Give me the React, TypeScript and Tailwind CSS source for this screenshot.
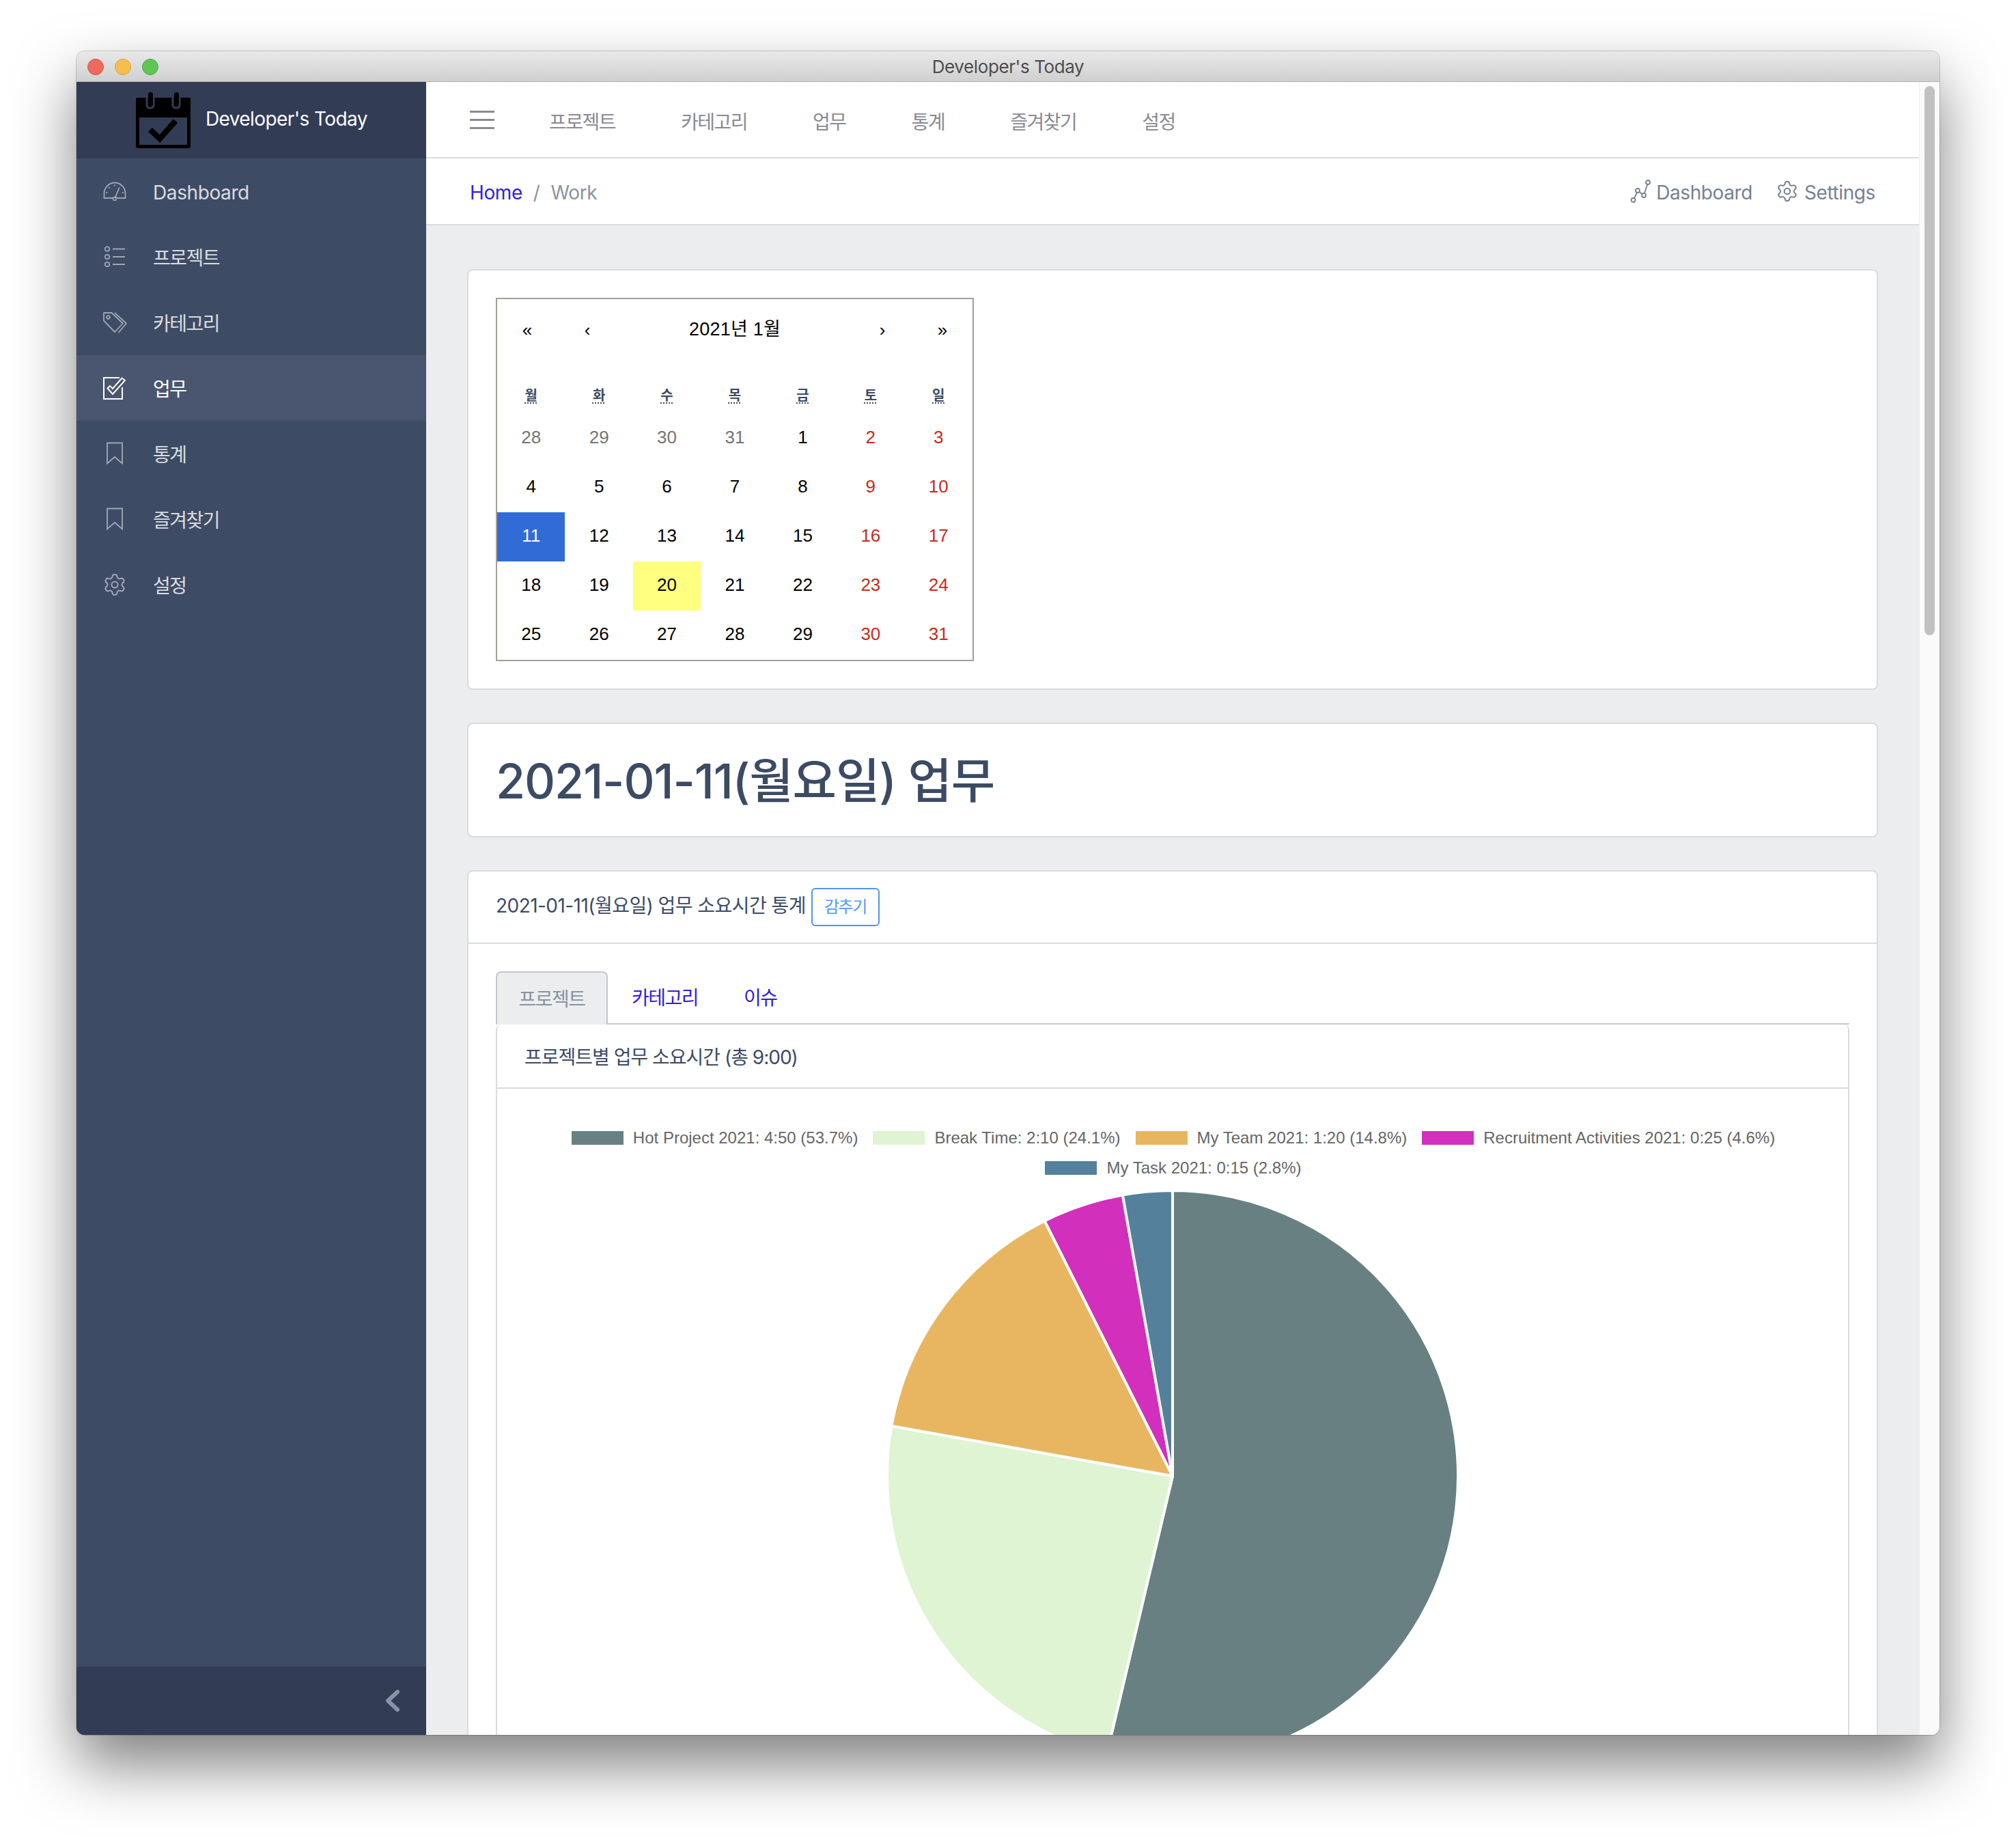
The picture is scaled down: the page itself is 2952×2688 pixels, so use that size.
import React from "react";
import { Settings } from "lucide-react";

const KR = "tracking-[-1.5px]";
const LAT = "tracking-[-0.4px]";

function IconGauge() {
  return (
    <svg width="34" height="28" viewBox="0 0 34 28" fill="none" stroke="currentColor" strokeWidth="1.8" strokeLinecap="round" strokeLinejoin="round">
      <path d="M13.500 24H1.500V17a15.500 15.500 0 0 1 31 0v7H21" />
      <circle cx="17" cy="25" r="2.400" />
      <path d="M18 22.600 23.500 9" />
      <path d="M17 5v.6M8.500 8.500l.5.500M5 16h.6M28.500 16h.6" />
    </svg>
  );
}
function IconList() {
  return (
    <svg width="32" height="32" viewBox="0 0 32 32" fill="none" stroke="currentColor" strokeWidth="1.8">
      <circle cx="5" cy="4.500" r="3.200" /><circle cx="5" cy="16" r="3.200" /><circle cx="5" cy="27" r="3.200" />
      <path d="M13 4.500h18M13 16h18M13 27h18" />
    </svg>
  );
}
function IconTags() {
  return (
    <svg width="36" height="32" viewBox="0 0 36 32" fill="none" stroke="currentColor" strokeWidth="1.800" strokeLinejoin="round">
      <path d="M2 2h11.500L30 17.500 18 30 2 13.500Z" />
      <circle cx="8.500" cy="8.500" r="2.300" />
      <path d="M18 2 35 17.500 23.500 31" />
    </svg>
  );
}
function IconTask() {
  return (
    <svg width="34" height="34" viewBox="0 0 34 34" fill="none" stroke="currentColor" strokeWidth="2">
      <path d="M28 16v17H1V2h23" />
      <path d="M6.500 17.500 10 14l4 4L27.500 2.500 32 6 14 26Z" />
    </svg>
  );
}
function IconBookmark() {
  return (
    <svg width="26" height="34" viewBox="0 0 26 34" fill="none" stroke="currentColor" strokeWidth="1.900">
      <path d="M2 1.500h22v30L13 22 2 31.500Z" />
    </svg>
  );
}
function IconChartLine() {
  return (
    <svg width="30" height="36" viewBox="0 0 30 36" fill="none" stroke="currentColor" strokeWidth="1.800">
      <circle cx="4.500" cy="31" r="3" /><circle cx="11" cy="17" r="3" /><circle cx="20" cy="24" r="3" /><circle cx="26" cy="5" r="3" />
      <path d="M6 28 10 20M13.500 19 18 22.500M21 21 25.200 8" />
    </svg>
  );
}
function Logo() {
  return (
    <svg width="80" height="82" viewBox="0 0 80 82">
      <path fill="#000" fillRule="evenodd" d="M3 8h75a2 2 0 0 1 2 2v69a3 3 0 0 1-3 3H3a3 3 0 0 1-3-3V10a2 2 0 0 1 2-2Zm2 29v40h70V37Z" />
      <path d="M16 2v17a4 4 0 0 0 4 4h2a4 4 0 0 0 4-4V2M54 2v17a4 4 0 0 0 4 4h2a4 4 0 0 0 4-4V2" fill="none" stroke="#323c55" strokeWidth="3" />
      <rect x="18" y="0" width="7" height="20" rx="3.500" fill="#000" />
      <rect x="56" y="0" width="7" height="20" rx="3.500" fill="#000" />
      <path d="M21 55 35 68 58 42" fill="none" stroke="#000" strokeWidth="8.500" />
    </svg>
  );
}

const side = [
  { t: "Dashboard", i: <IconGauge /> },
  { t: "프로젝트", i: <IconList /> },
  { t: "카테고리", i: <IconTags /> },
  { t: "업무", i: <IconTask />, a: true },
  { t: "통계", i: <IconBookmark /> },
  { t: "즐겨찾기", i: <IconBookmark /> },
  { t: "설정", i: <Settings size={36} strokeWidth={1.35} /> },
];

function Sidebar() {
  return (
    <div className="w-[512px] shrink-0 flex flex-col bg-[#3e4b64]">
      <div className="h-[112px] bg-[#323c55] flex items-center pl-[87px] gap-[22px] text-[28px] text-white">
        <Logo />
        <span className="-translate-y-[2px] tracking-[-0.6px]">Developer's Today</span>
      </div>
      <div className="flex-1">
        {side.map((s) => (
          <div key={s.t} className={`h-[96px] flex items-center text-[28px] ${s.a ? "bg-[#4a566f] text-white" : "text-white/80"}`}>
            <div className={`w-[112px] flex justify-center ${s.a ? "text-white" : "text-white/50"}`}>{s.i}</div>
            <span className={`pt-[3px] ${s.t === "Dashboard" ? LAT : KR}`}>{s.t}</span>
          </div>
        ))}
      </div>
      <div className="h-[100px] bg-[#323c55] flex items-center justify-end pr-[38px]">
        <svg width="24" height="32" viewBox="0 0 24 32" fill="none" stroke="#8a93a3" strokeWidth="6" strokeLinecap="round" strokeLinejoin="round">
          <path d="M20 3 6 16l14 13" />
        </svg>
      </div>
    </div>
  );
}

function TopNav() {
  return (
    <div className="h-[112px] bg-white border-b-2 border-[#d8dbe0] flex items-center pl-[64px] shrink-0">
      <div className="w-[36px] flex flex-col gap-[9px]">
        <div className="h-[3px] bg-[#8a8a94]" /><div className="h-[3px] bg-[#8a8a94]" /><div className="h-[3px] bg-[#8a8a94]" />
      </div>
      <div className={`flex ml-[80px] gap-[96px] pt-[7px] text-[28px] text-[#8a8a94] ${KR}`}>
        {["프로젝트", "카테고리", "업무", "통계", "즐겨찾기", "설정"].map((x) => <span key={x}>{x}</span>)}
      </div>
    </div>
  );
}

function Breadcrumb() {
  return (
    <div className={`h-[98px] bg-white border-b-2 border-[#d8dbe0] flex items-center pl-[64px] pr-[64px] justify-between text-[28px] shrink-0 ${LAT}`}>
      <div className="flex items-center pt-[3px]">
        <span className="text-[#321fdb]">Home</span>
        <span className="text-[#8a93a2] ml-[16px]">/</span>
        <span className="text-[#8a93a2] ml-[16px]">Work</span>
      </div>
      <div className="flex items-center text-[#768192]">
        <IconChartLine />
        <span className="ml-[8px] pt-[3px]">Dashboard</span>
        <Settings size={34} strokeWidth={1.4} className="ml-[34px]" />
        <span className="ml-[8px] pt-[3px]">Settings</span>
      </div>
    </div>
  );
}

const days: [string, string][] = [];
const gray = "text-[#757575]", red = "text-[#c92a1d]", blk = "text-black";
[28, 29, 30, 31].forEach((d) => days.push([String(d), gray]));
for (let d = 1; d <= 31; d++) {
  const idx = (d + 3) % 7;
  days.push([String(d), idx === 5 || idx === 6 ? red : blk]);
}

function Calendar() {
  return (
    <div className="w-[700px] border-2 border-[#a0a096] bg-white font-['Liberation_Sans','Noto_Sans_CJK_KR',sans-serif] text-[26px] text-black">
      <div className="h-[88px] mb-[26px] flex items-center text-center">
        <span className="w-[88px] pt-[2px]">«</span>
        <span className="w-[88px] pt-[2px]">‹</span>
        <span className="flex-1 text-[27px] tracking-[0.2px]">2021년 1월</span>
        <span className="w-[88px] pt-[2px]">›</span>
        <span className="w-[88px] pt-[2px]">»</span>
      </div>
      <div className="grid grid-cols-7 h-[54px] items-center text-center text-[20px] font-bold text-[#3c4b64]">
        {["월", "화", "수", "목", "금", "토", "일"].map((x) => (
          <div key={x}><span className="underline decoration-dotted decoration-[1.5px] underline-offset-[3px]">{x}</span></div>
        ))}
      </div>
      <div className="grid grid-cols-7 auto-rows-[72px]">
        {days.map(([t, c], i) => {
          const active = i === 14, today = i === 23;
          return (
            <div key={i} className={`flex items-center justify-center pb-[3px] ${active ? "bg-[#316cd6] text-white" : today ? "bg-[#ffff80] text-black" : c}`}>{t}</div>
          );
        })}
      </div>
    </div>
  );
}

const slices = [
  { p: 0.537, c: "#688082" },
  { p: 0.241, c: "#dff4d2" },
  { p: 0.148, c: "#e8b661" },
  { p: 0.046, c: "#d22fbd" },
  { p: 0.028, c: "#54809b" },
];

function Pie() {
  let a = 0;
  const R = 418, C = 420;
  return (
    <svg width="840" height="840" viewBox="0 0 840 840" className="block mx-auto">
      {slices.map((s) => {
        const a0 = a, a1 = a + s.p * Math.PI * 2;
        a = a1;
        const x0 = C + R * Math.sin(a0), y0 = C - R * Math.cos(a0);
        const x1 = C + R * Math.sin(a1), y1 = C - R * Math.cos(a1);
        return (
          <path key={s.c} fill={s.c} stroke="#fff" strokeWidth="4" strokeLinejoin="round"
            d={`M${C} ${C}L${x0} ${y0}A${R} ${R} 0 ${s.p > 0.5 ? 1 : 0} 1 ${x1} ${y1}Z`} />
        );
      })}
    </svg>
  );
}

const legend = [
  ["#688082", "Hot Project 2021: 4:50 (53.7%)"],
  ["#dff4d2", "Break Time: 2:10 (24.1%)"],
  ["#e8b661", "My Team 2021: 1:20 (14.8%)"],
  ["#d22fbd", "Recruitment Activities 2021: 0:25 (4.6%)"],
  ["#54809b", "My Task 2021: 0:15 (2.8%)"],
];

function Legend() {
  return (
    <div className="mx-auto w-[1800px] pl-[2px] flex flex-wrap justify-center gap-x-[22px] gap-y-[16px] font-['Liberation_Sans',sans-serif] text-[24px] leading-[28px] text-[#666666]">
      {legend.map(([c, t]) => (
        <div key={t} className="flex items-center gap-[14px]">
          <span className="w-[76px] h-[20px]" style={{ backgroundColor: c }} />
          <span>{t}</span>
        </div>
      ))}
    </div>
  );
}

function Card({ children, className = "" }: { children: React.ReactNode; className?: string }) {
  return <div className={`bg-white border-2 border-[#d8dbe0] rounded-[8px] ${className}`}>{children}</div>;
}

function Content() {
  return (
    <div className="flex-1 min-h-0 overflow-hidden bg-[#ebedef] px-[60px] pt-[64px] flex flex-col gap-[48px]">
      <Card className="p-[40px] shrink-0"><Calendar /></Card>
      <Card className="px-[40px] py-[40px] shrink-0">
        <h1 className="text-[70px] leading-[84px] font-medium text-[#3c4b64] tracking-[-1.1px] pt-[2px] -mb-[2px]">2021-01-11(월요일) 업무</h1>
      </Card>
      <Card className="shrink-0">
        <div className="h-[106px] border-b-2 border-[#d8dbe0] flex items-center px-[40px] text-[28px] text-[#3c4b64]">
          <span className="tracking-[-0.55px] -translate-y-[2px]">2021-01-11(월요일) 업무 소요시간 통계</span>
          <span className={`ml-[8px] h-[56px] w-[100px] border-2 border-[#4f94f0] rounded-[6px] flex items-center justify-center text-[24px] text-[#4f9bf5] ${KR}`}>감추기</span>
        </div>
        <div className="p-[40px]">
          <div className={`flex h-[78px] border-b-2 border-[#c4c9d0] text-[28px] text-[#321fdb] ${KR}`}>
            <div className="w-[164px] h-[78px] bg-[#ebedef] border-2 border-b-0 border-[#c4c9d0] rounded-t-[8px] flex items-center justify-center text-[#8a93a2] pt-[2px]">프로젝트</div>
            <div className="flex items-center pl-[35px] pr-[36px] pt-[2px]">카테고리</div>
            <div className="flex items-center pl-[31px] pt-[2px]">이슈</div>
          </div>
          <div className="border-2 border-[#d8dbe0] border-t-0 rounded-[8px] h-[2000px]">
            <div className="h-[94px] border-b-2 border-[#d8dbe0] flex items-center px-[40px] text-[28px] text-[#3c4b64]">
              <span className="tracking-[-1px] pt-[3px]">프로젝트별 업무 소요시간 (총 9:00)</span>
            </div>
            <div className="pt-[58px]">
              <Legend />
              <div className="h-[17px]" />
              <Pie />
            </div>
          </div>
        </div>
      </Card>
    </div>
  );
}

export default function App() {
  return (
    <div className="w-[2952px] h-[2688px] bg-white pl-[112px] pt-[75px] overflow-hidden font-['Inter','Noto_Sans_CJK_KR',sans-serif]">
      <div className="w-[2728px] h-[2465px] rounded-[12px] overflow-hidden flex flex-col shadow-[0_0_0_1px_rgba(0,0,0,0.18),0_44px_90px_rgba(0,0,0,0.5)]">
        <div className="relative h-[45px] shrink-0 bg-gradient-to-b from-[#e9e9e9] to-[#d0d0d0] border-b border-[#b0b0b0] flex items-center justify-center text-[26px] text-[#4d4d4d] tracking-[-0.4px] pt-[1px]">
          <div className="absolute left-[16px] top-[11px] flex gap-[16px]">
            <span className="w-[24px] h-[24px] rounded-full bg-[#ec6a5e] border border-[#d6544a]" />
            <span className="w-[24px] h-[24px] rounded-full bg-[#f5bf4f] border border-[#dba23a]" />
            <span className="w-[24px] h-[24px] rounded-full bg-[#61c554] border border-[#4eab41]" />
          </div>
          Developer's Today
        </div>
        <div className="flex-1 min-h-0 flex">
          <Sidebar />
          <div className="flex-1 min-w-0 flex flex-col">
            <TopNav />
            <Breadcrumb />
            <Content />
          </div>
          <div className="w-[30px] shrink-0 bg-[#fafafa] border-l border-[#eeeeee] pl-[7px] pt-[6px]">
            <div className="w-[15px] h-[804px] rounded-full bg-[#c1c1c1]" />
          </div>
        </div>
      </div>
    </div>
  );
}
